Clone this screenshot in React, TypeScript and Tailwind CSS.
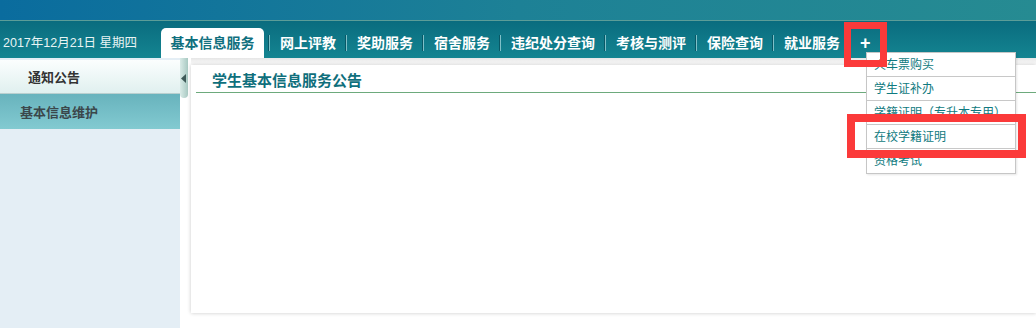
const tabs = ['网上评教', '奖助服务', '宿舍服务', '违纪处分查询', '考核与测评', '保险查询', '就业服务']

const menuItems = ['火车票购买', '学生证补办', '学籍证明（专升本专用）', '在校学籍证明', '资格考试']

const cjk = { fontFamily: '"Liberation Sans", "Noto Sans CJK SC", sans-serif' }

const Separator = () => <div className="w-px h-[16px] bg-[#7fc0c8] shadow-[-1px_0_0_#085866]" />

const NavTab = ({ label }: { label: string }) => (
  <div className="flex items-center h-[30px]">
    <Separator />
    <span className="px-[10px] text-[14px] font-bold text-white leading-none">{label}</span>
  </div>
)

const Sidebar = () => (
  <div className="w-[180px] bg-[#e4eef5] shrink-0 pt-[2px]">
    <div className="h-[34px] flex items-center pt-[2px] pl-[28px] bg-gradient-to-b from-[#fbfefe] to-[#e0f0ef] border-b border-[#b9cfcf] text-[13px] font-bold text-[#333]">
      通知公告
    </div>
    <div className="h-[35px] flex items-center pt-[2px] pl-[20px] bg-gradient-to-b from-[#68b3bd] to-[#82cad1] text-[13px] font-bold text-[#3b474b]">
      基本信息维护
    </div>
  </div>
)

const Splitter = () => (
  <div className="w-[11px] shrink-0 bg-white">
    <div className="w-[8px] h-[40px] rounded-b-[4px] bg-gradient-to-r from-[#d9ebe7] to-[#a8c9c2] flex items-center justify-start pl-[1px]">
      <svg width="5" height="9" viewBox="0 0 5 9">
        <path d="M5 0 L0 4.5 L5 9 Z" fill="#3e5a58" />
      </svg>
    </div>
  </div>
)

export default function App() {
  return (
    <div className="relative w-[1036px] h-[328px] overflow-hidden bg-white" style={cjk}>
      <div className="h-[20px] bg-gradient-to-r from-[#0a6c9e] via-[#1d8196] to-[#268b92]" />
      <div className="h-px bg-[#5c9d98]" />
      <div className="h-[37px] flex items-end bg-gradient-to-b from-[#0a6c7f] to-[#148591]">
        <div className="w-[161px] h-[30px] flex items-center pl-[3px] text-[12.5px] text-[#e8f4f4]">
          2017年12月21日 星期四
        </div>
        <div className="w-[103px] h-[30px] flex items-center justify-center bg-white rounded-t-[5px] text-[14px] font-bold text-[#10707e]">
          基本信息服务
        </div>
        <div className="w-[5px]" />
        {tabs.map(t => (
          <NavTab key={t} label={t} />
        ))}
        <div className="flex items-center h-[30px]">
          <Separator />
          <span className="px-[9px] text-[18px] font-bold text-white leading-none">+</span>
        </div>
      </div>
      <div className="flex h-[270px]">
        <Sidebar />
        <Splitter />
        <div className="flex-1 bg-gradient-to-b from-[#e6e6e6] to-white to-[7px] pt-[7px] pb-[15px]">
          <div className="h-full bg-white shadow-[0_0_4px_rgba(0,0,0,0.22)]">
            <div className="ml-[5px] h-[28px] flex items-end pb-px pl-[16px] border-b border-[#6daa7c]">
              <span className="text-[15px] font-bold text-[#0f6f7c] leading-[20px]">学生基本信息服务公告</span>
            </div>
          </div>
        </div>
      </div>

      <div className="absolute left-[866px] top-[52px] w-[150px] bg-white border border-[#c6c6c6] shadow-[1px_1px_2px_rgba(0,0,0,0.1)]">
        {menuItems.map((m, i) => (
          <div
            key={m}
            className={`h-[24px] flex items-center pl-[7px] text-[12px] text-[#0f7a80] ${i < menuItems.length - 1 ? 'border-b border-[#c8c8c8]' : ''}`}
          >
            {m}
          </div>
        ))}
      </div>

      <div className="absolute left-[844px] top-[22px] w-[43px] h-[45px] border-[7px] border-[#fb3a3a]" />
      <div className="absolute left-[847px] top-[114px] w-[179px] h-[44px] border-[8px] border-[#fb3a3a]" />
    </div>
  )
}
